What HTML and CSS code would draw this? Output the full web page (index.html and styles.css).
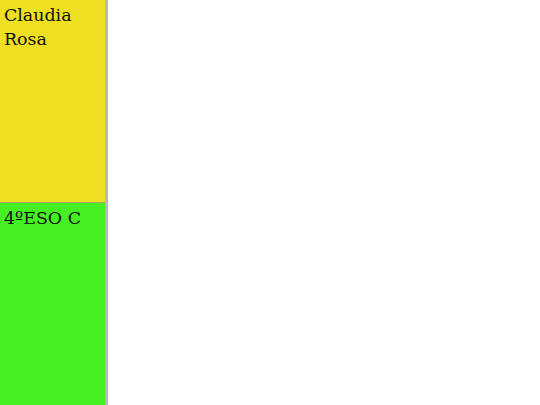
FILE: index.html
```html
<!DOCTYPE html>
<html>
<head>
<meta charset="utf-8">
<link rel="stylesheet" href="styles.css">
</head>
<body>
<div class="sidebar">
  <div class="cell cell-name">Claudia Rosa</div>
  <div class="cell cell-group">4ºESO C</div>
</div>
</body>
</html>
```

FILE: styles.css
```css
html, body {
  margin: 0;
  padding: 0;
  background: #ffffff;
  height: 100%;
}
body {
  font-family: "DejaVu Serif", serif;
  font-size: 17.4px;
  line-height: 24px;
  color: #111;
}
.sidebar {
  width: 105px;
  height: 405px;
  display: flex;
  flex-direction: column;
  border-right: 3px solid #b8b8b8;
}
.cell {
  flex: 1;
  padding: 3px 3px 3px 4px;
}
.cell-name {
  background: #eedf22;
  border-bottom: 1px solid #a0a060;
}
.cell-group {
  background: #46ef22;
}
```
